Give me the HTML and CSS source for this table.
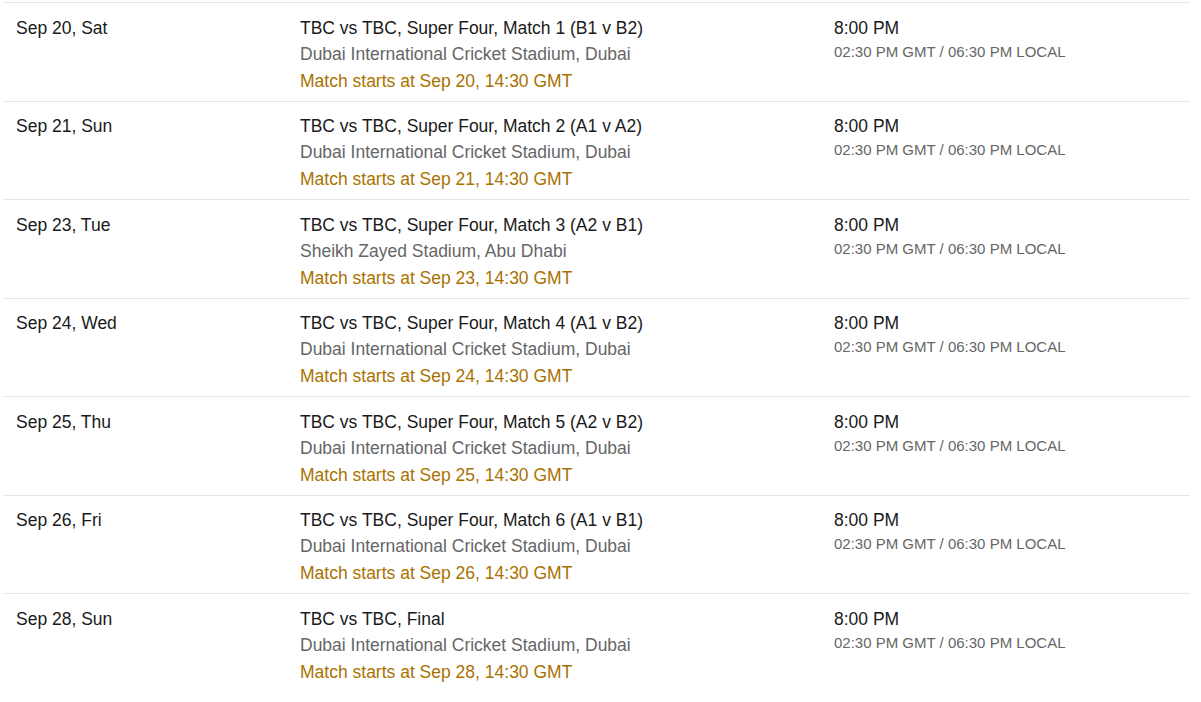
FILE: index.html
```html
<!DOCTYPE html>
<html>
<head>
<meta charset="utf-8">
<link rel="stylesheet" href="styles.css">
</head>
<body>
<div class="schedule">
  <div class="row">
    <div class="cell date">Sep 20, Sat</div>
    <div class="cell match">
      <div class="title">TBC vs TBC, Super Four, Match 1 (B1 v B2)</div>
      <div class="venue">Dubai International Cricket Stadium, Dubai</div>
      <div class="start">Match starts at Sep 20, 14:30 GMT</div>
    </div>
    <div class="cell time">
      <div class="local">8:00 PM</div>
      <div class="gmt">02:30 PM GMT / 06:30 PM LOCAL</div>
    </div>
  </div>
  <div class="row">
    <div class="cell date">Sep 21, Sun</div>
    <div class="cell match">
      <div class="title">TBC vs TBC, Super Four, Match 2 (A1 v A2)</div>
      <div class="venue">Dubai International Cricket Stadium, Dubai</div>
      <div class="start">Match starts at Sep 21, 14:30 GMT</div>
    </div>
    <div class="cell time">
      <div class="local">8:00 PM</div>
      <div class="gmt">02:30 PM GMT / 06:30 PM LOCAL</div>
    </div>
  </div>
  <div class="row">
    <div class="cell date">Sep 23, Tue</div>
    <div class="cell match">
      <div class="title">TBC vs TBC, Super Four, Match 3 (A2 v B1)</div>
      <div class="venue">Sheikh Zayed Stadium, Abu Dhabi</div>
      <div class="start">Match starts at Sep 23, 14:30 GMT</div>
    </div>
    <div class="cell time">
      <div class="local">8:00 PM</div>
      <div class="gmt">02:30 PM GMT / 06:30 PM LOCAL</div>
    </div>
  </div>
  <div class="row">
    <div class="cell date">Sep 24, Wed</div>
    <div class="cell match">
      <div class="title">TBC vs TBC, Super Four, Match 4 (A1 v B2)</div>
      <div class="venue">Dubai International Cricket Stadium, Dubai</div>
      <div class="start">Match starts at Sep 24, 14:30 GMT</div>
    </div>
    <div class="cell time">
      <div class="local">8:00 PM</div>
      <div class="gmt">02:30 PM GMT / 06:30 PM LOCAL</div>
    </div>
  </div>
  <div class="row">
    <div class="cell date">Sep 25, Thu</div>
    <div class="cell match">
      <div class="title">TBC vs TBC, Super Four, Match 5 (A2 v B2)</div>
      <div class="venue">Dubai International Cricket Stadium, Dubai</div>
      <div class="start">Match starts at Sep 25, 14:30 GMT</div>
    </div>
    <div class="cell time">
      <div class="local">8:00 PM</div>
      <div class="gmt">02:30 PM GMT / 06:30 PM LOCAL</div>
    </div>
  </div>
  <div class="row">
    <div class="cell date">Sep 26, Fri</div>
    <div class="cell match">
      <div class="title">TBC vs TBC, Super Four, Match 6 (A1 v B1)</div>
      <div class="venue">Dubai International Cricket Stadium, Dubai</div>
      <div class="start">Match starts at Sep 26, 14:30 GMT</div>
    </div>
    <div class="cell time">
      <div class="local">8:00 PM</div>
      <div class="gmt">02:30 PM GMT / 06:30 PM LOCAL</div>
    </div>
  </div>
  <div class="row last">
    <div class="cell date">Sep 28, Sun</div>
    <div class="cell match">
      <div class="title">TBC vs TBC, Final</div>
      <div class="venue">Dubai International Cricket Stadium, Dubai</div>
      <div class="start">Match starts at Sep 28, 14:30 GMT</div>
    </div>
    <div class="cell time">
      <div class="local">8:00 PM</div>
      <div class="gmt">02:30 PM GMT / 06:30 PM LOCAL</div>
    </div>
  </div>
</div>
</body>
</html>
```
FILE: styles.css
```css
html, body {
  margin: 0;
  padding: 0;
  background: #ffffff;
}
body {
  font-family: "Liberation Sans", Arial, sans-serif;
  font-size: 17.5px;
  color: #1a1a1a;
}
.schedule {
  margin: 2px 0 0 3px;
  width: 1187px;
}
.row {
  display: grid;
  grid-template-columns: 284px 534px 369px;
  border-top: 1px solid #e6e6e6;
  padding: 11.5px 0 7px 0;
  box-sizing: border-box;
  height: 98.5px;
}
.cell {
  padding-left: 13px;
  line-height: 26px;
}
.date {
  color: #1a1a1a;
}
.title {
  color: #1a1a1a;
}
.venue {
  color: #666666;
}
.start {
  color: #a97200;
  line-height: 28px;
}
.local {
  color: #1a1a1a;
}
.gmt {
  font-size: 15px;
  line-height: 22px;
  color: #666666;
}
```
